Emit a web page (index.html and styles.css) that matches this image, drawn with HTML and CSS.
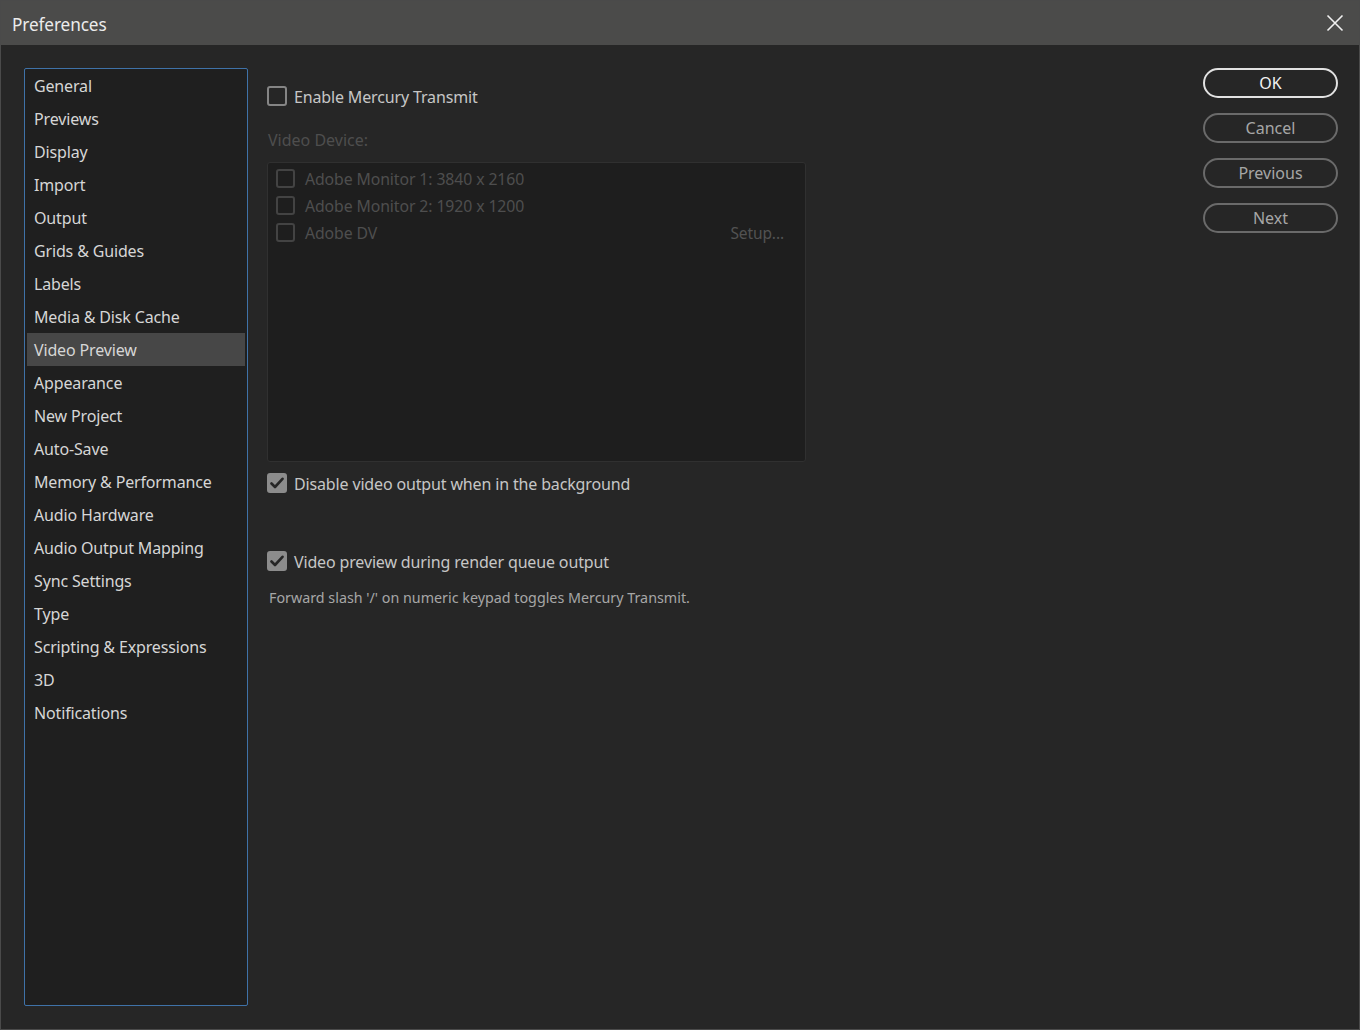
FILE: index.html
```html
<!DOCTYPE html>
<html>
<head>
<meta charset="utf-8">
<title>Preferences</title>
<link rel="stylesheet" href="styles.css">
</head>
<body>
<div class="window">
  <header class="titlebar">
    <span class="title">Preferences</span>
    <svg class="close" width="18" height="18" viewBox="0 0 18 18"><path d="M1.5 1.5 L16.5 16.5 M16.5 1.5 L1.5 16.5" stroke="#f0f0f0" stroke-width="1.6" fill="none"/></svg>
  </header>
  <main class="body">
    <nav class="sidebar">
      <div class="item">General</div>
      <div class="item">Previews</div>
      <div class="item">Display</div>
      <div class="item">Import</div>
      <div class="item">Output</div>
      <div class="item">Grids &amp; Guides</div>
      <div class="item">Labels</div>
      <div class="item">Media &amp; Disk Cache</div>
      <div class="item selected">Video Preview</div>
      <div class="item">Appearance</div>
      <div class="item">New Project</div>
      <div class="item">Auto-Save</div>
      <div class="item">Memory &amp; Performance</div>
      <div class="item">Audio Hardware</div>
      <div class="item">Audio Output Mapping</div>
      <div class="item">Sync Settings</div>
      <div class="item">Type</div>
      <div class="item">Scripting &amp; Expressions</div>
      <div class="item">3D</div>
      <div class="item">Notifications</div>
    </nav>
    <section class="content">
      <label class="check first"><span class="box"></span><span class="ctext">Enable Mercury Transmit</span></label>
      <div class="device-label">Video Device:</div>
      <div class="device-box">
        <div class="device"><span class="box small"></span><span class="dname">Adobe Monitor 1: 3840 x 2160</span></div>
        <div class="device"><span class="box small"></span><span class="dname">Adobe Monitor 2: 1920 x 1200</span></div>
        <div class="device"><span class="box small"></span><span class="dname">Adobe DV</span><span class="setup">Setup...</span></div>
      </div>
      <label class="check second"><span class="box checked"><svg width="14" height="12" viewBox="0 0 14 12"><path d="M1.5 6.5 L5 10 L12.5 1.8" stroke="#262626" stroke-width="2.6" fill="none" stroke-linecap="round" stroke-linejoin="round"/></svg></span><span class="ctext">Disable video output when in the background</span></label>
      <label class="check third"><span class="box checked"><svg width="14" height="12" viewBox="0 0 14 12"><path d="M1.5 6.5 L5 10 L12.5 1.8" stroke="#262626" stroke-width="2.6" fill="none" stroke-linecap="round" stroke-linejoin="round"/></svg></span><span class="ctext">Video preview during render queue output</span></label>
      <p class="note">Forward slash '/' on numeric keypad toggles Mercury Transmit.</p>
    </section>
    <aside class="buttons">
      <button class="btn primary">OK</button>
      <button class="btn">Cancel</button>
      <button class="btn">Previous</button>
      <button class="btn">Next</button>
    </aside>
  </main>
</div>
</body>
</html>
```
FILE: styles.css
```css
* { box-sizing: border-box; }
html, body { margin: 0; padding: 0; background: #262626; }
body {
  font-family: "Noto Sans", "Open Sans", sans-serif;
  width: 1360px;
  height: 1030px;
  overflow: hidden;
}
.window {
  width: 1360px;
  height: 1030px;
  border: 1px solid #4a4a4a;
  background: #262626;
  display: flex;
  flex-direction: column;
}
.titlebar {
  height: 44px;
  background: #4b4b4a;
  display: flex;
  align-items: center;
  justify-content: space-between;
  padding: 0 15px 0 11px;
  flex: none;
}
.title {
  color: #ececec;
  font-size: 17.2px;
  letter-spacing: -0.1px;
  margin-top: 2px;
}
.close { display: block; }
.body {
  flex: 1;
  display: flex;
  padding: 23px 21px 23px 23px;
}
.sidebar {
  width: 224px;
  background: #1f1f1f;
  border: 1px solid #3f72a8;
  border-radius: 2px;
  padding: 0 2px;
  flex: none;
}
.item {
  height: 33px;
  line-height: 33px;
  padding-top: 1px;
  padding-left: 7px;
  color: #d6d6d6;
  font-size: 16px;
  letter-spacing: -0.15px;
  white-space: nowrap;
  overflow: hidden;
}
.item.selected { background: #474747; }
.content {
  flex: 1;
  padding-left: 19px;
  padding-top: 18px;
}
.check {
  display: flex;
  align-items: center;
  height: 20px;
  color: #c6c6c6;
  font-size: 16px;
  letter-spacing: -0.15px;
}
.ctext { padding-top: 2px; }
.box {
  width: 20px;
  height: 20px;
  border: 2px solid #858585;
  border-radius: 3px;
  margin-right: 7px;
  flex: none;
  display: flex;
  align-items: center;
  justify-content: center;
}
.box.checked { background: #8c8c8c; border-color: #8c8c8c; }
.box.small {
  width: 19px;
  height: 19px;
  border-color: #434343;
  margin-right: 10px;
}
.device-label {
  margin-top: 22px;
  color: #4e4e4e;
  font-size: 16px;
  height: 24px;
  line-height: 24px;
  padding-left: 1px;
}
.device-box {
  margin-top: 10px;
  width: 539px;
  height: 300px;
  background: #1e1e1e;
  border: 1px solid #303030;
  border-radius: 3px;
  padding: 2px 21px 0 8px;
}
.device {
  height: 27px;
  display: flex;
  align-items: center;
  color: #4e4e4e;
  font-size: 15.8px;
  letter-spacing: -0.1px;
}
.dname { flex: 1; }
.setup { color: #525252; font-size: 15.5px; }
.second { margin-top: 11px; }
.third { margin-top: 58px; }
.note {
  margin: 17px 0 0 2px;
  color: #a6a6a6;
  font-size: 14.3px;
  letter-spacing: 0;
}
.buttons {
  width: 135px;
  flex: none;
  display: flex;
  flex-direction: column;
  gap: 15px;
}
.btn {
  height: 30px;
  border-radius: 15px;
  border: 2px solid #6a6a6a;
  background: transparent;
  color: #a6a6a6;
  font-family: "Noto Sans", "Open Sans", sans-serif;
  font-size: 16px;
  padding: 0;
}
.btn.primary { border-color: #e2e2e2; color: #f2f2f2; }
```
